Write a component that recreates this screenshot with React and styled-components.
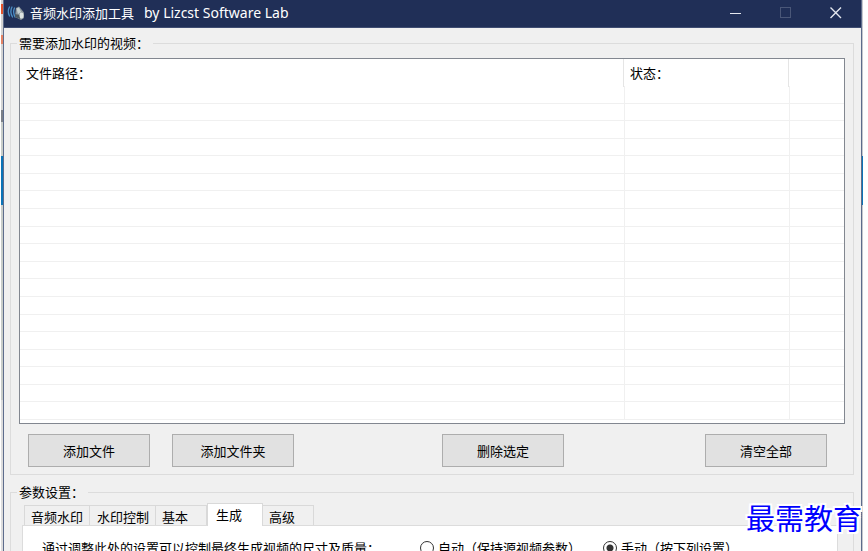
import React, { useState } from "react";
import styled, { createGlobalStyle } from "styled-components";

const ROW_COUNT = 19;
const tabs = ["音频水印", "水印控制", "基本", "生成", "高级"];

const App = () => {
    const [activeTab, setActiveTab] = useState("生成");
    const [mode, setMode] = useState("manual");

    return (
        <Desktop>
            <GlobalStyle />
            <LeftEdge />
            <Window>
                <TitleBar>
                    <SpeakerIcon />
                    <Title>音频水印添加工具 <Vendor>by Lizcst Software Lab</Vendor></Title>
                    <CaptionButton aria-label="最小化">
                        <svg width="12" height="12"><path d="M0 6.5H11" stroke="#e4e7ee" /></svg>
                    </CaptionButton>
                    <CaptionButton aria-label="最大化" disabled>
                        <svg width="12" height="12"><rect x="0.5" y="0.5" width="10" height="10" fill="none" stroke="#4a5778" /></svg>
                    </CaptionButton>
                    <CaptionButton aria-label="关闭">
                        <svg width="12" height="12"><path d="M0.5 0.5L11 11M11 0.5L0.5 11" stroke="#e4e7ee" strokeWidth="1.4" /></svg>
                    </CaptionButton>
                </TitleBar>
                <Body>
                    <Group>
                        <Legend>需要添加水印的视频：</Legend>
                        <FileTable>
                            <thead>
                                <HeadRow>
                                    <th>文件路径：</th>
                                    <th>状态：</th>
                                    <th aria-hidden="true" />
                                </HeadRow>
                            </thead>
                            <tbody>
                                {Array.from({ length: ROW_COUNT }, (_, i) => (
                                    <FileRow key={i}>
                                        <td />
                                        <td />
                                        <td />
                                    </FileRow>
                                ))}
                            </tbody>
                        </FileTable>
                        <Actions>
                            <Button>添加文件</Button>
                            <Button>添加文件夹</Button>
                            <DeleteButton>删除选定</DeleteButton>
                            <ClearButton>清空全部</ClearButton>
                        </Actions>
                    </Group>
                    <Group>
                        <Legend>参数设置：</Legend>
                        <TabList role="tablist">
                            {tabs.map(name => (
                                <Tab
                                    key={name}
                                    role="tab"
                                    aria-selected={name === activeTab}
                                    $active={name === activeTab}
                                    onClick={() => setActiveTab(name)}
                                >
                                    {name}
                                </Tab>
                            ))}
                        </TabList>
                        <TabPanel role="tabpanel">
                            <Hint>通过调整此处的设置可以控制最终生成视频的尺寸及质量：</Hint>
                            <RadioLabel>
                                <Radio name="mode" checked={mode === "auto"} onChange={() => setMode("auto")} />
                                自动（保持源视频参数）
                            </RadioLabel>
                            <RadioLabel>
                                <Radio name="mode" checked={mode === "manual"} onChange={() => setMode("manual")} />
                                手动（按下列设置）
                            </RadioLabel>
                        </TabPanel>
                    </Group>
                </Body>
            </Window>
            <RightEdge />
            <Watermark>最需教育</Watermark>
        </Desktop>
    )
}

const SpeakerIcon = () => (
    <svg width="18" height="18" viewBox="0 0 18 18" aria-hidden="true">
        <g fill="none" stroke="#4c8fc4" strokeWidth="1.3" strokeLinecap="round">
            <path d="M2.5 3Q0 7 2.5 12" />
            <path d="M5 3Q2.5 7.5 5.5 13" />
            <path d="M7.5 4Q5.5 8 8 13" />
        </g>
        <path d="M9 4L12 2.5L17 8.5V14L14 16L8 13Z" fill="#8c979d" />
        <path d="M9.5 4.5L12 3.5L14 8L11 10Z" fill="#c6d0d2" />
        <path d="M8 10L13 11L13 15L8 13Z" fill="#4d5961" />
        <ellipse cx="14.5" cy="11.5" rx="2" ry="3" fill="#dce3e3" />
    </svg>
)

const GlobalStyle = createGlobalStyle`
    * {
        box-sizing: border-box;
    }
    body {
        margin: 0;
        overflow: hidden;
        background: #fff;
        color: #000;
        font: 13px/18px "Noto Sans CJK SC", sans-serif;
    }
    button {
        font: inherit;
        color: inherit;
    }
`;

const Desktop = styled.div`
    position: relative;
    display: flex;
    height: 100vh;
    overflow: hidden;
`;

const LeftEdge = styled.div`
    width: 3px;
    border-left: 1px solid #fff;
    background: linear-gradient(
        #d3d3d3 4px, #e2532c 4px 14px, #d3d3d3 14px 35px, #e58263 35px 44px,
        #d3d3d3 44px 110px, #7c8088 110px 122px, #c8cdc9 122px 156px,
        #0b74b8 156px 205px, #c8cdc9 205px 400px, #dcdcdc 400px
    );
`;

const RightEdge = styled.div`
    width: 6px;
    border-right: 5px solid #fff;
    background: linear-gradient(#c5c8cd 156px, #0b74b8 156px 205px, #c5c8cd 205px);
`;

const Window = styled.main`
    flex: 1;
    min-width: 0;
    height: max-content;
    border: 1px solid #5d6c8c;
    border-width: 0 1px;
    background: #f0f0f0;
`;

const TitleBar = styled.header`
    display: flex;
    align-items: center;
    height: 28px;
    padding: 0 0 1px 3px;
    border-bottom: 1px solid #3f4d72;
    background: #202f57;
    color: #fff;
`;

const Title = styled.h1`
    display: flex;
    flex: 1;
    align-items: baseline;
    gap: 10px;
    margin: 0 0 0 5px;
    font: 13px/18px "Noto Sans CJK SC", sans-serif;
`;

const Vendor = styled.span`
    font: 14px/18px "Noto Sans", sans-serif;
`;

const CaptionButton = styled.button`
    display: flex;
    align-items: center;
    justify-content: center;
    width: 50px;
    height: 27px;
    padding: 0;
    border: 0;
    background: none;
`;

const Body = styled.div`
    padding: 6px 7px 24px 6px;
`;

const Group = styled.fieldset`
    min-width: 0;
    margin: 0 0 8px;
    padding: 0 8px 7px;
    border: 1px solid #dcdcdc;
`;

const Legend = styled.legend`
    margin-left: -2px;
    padding: 0 4px 0 2px;
`;

const FileTable = styled.table`
    display: block;
    margin-top: 6px;
    padding-bottom: 3px;
    border: 1px solid #828790;
    background: #fff;

    thead {
        display: block;
    }
    tbody {
        display: flex;
        flex-direction: column;
        height: 334px;
    }
`;

const HeadRow = styled.tr`
    display: grid;
    grid-template-columns: 1fr 165px 55px;
    height: 27px;

    th {
        padding: 5px 6px;
        border-right: 1px solid #e5e5e5;
        font-weight: 400;
        text-align: left;
    }
    th:last-child {
        border-right: 0;
    }
`;

const FileRow = styled.tr`
    flex: 1;
    display: grid;
    grid-template-columns: 1fr 165px 54px;
    border-bottom: 1px solid #f0f0f0;

    td {
        padding: 0;
        border-right: 1px solid #f0f0f0;
    }
    td:last-child {
        border-right: 0;
    }
`;

const Actions = styled.div`
    display: flex;
    padding: 10px 18px 0 9px;
`;

const Button = styled.button`
    width: 122px;
    height: 33px;
    padding: 0;
    border: 1px solid #adadad;
    background: #e1e1e1;

    & + & {
        margin-left: 22px;
    }
`;

const DeleteButton = styled(Button)`
    && {
        margin-left: 148px;
    }
`;

const ClearButton = styled(Button)`
    && {
        margin-left: auto;
    }
`;

const TabList = styled.div`
    display: flex;
    align-items: flex-end;
    height: 24px;
    padding-left: 5px;
`;

const Tab = styled.button`
    height: ${props => props.$active ? "23px" : "20px"};
    margin-bottom: ${props => props.$active ? "-1px" : "0"};
    padding: ${props => props.$active ? "0 20px 0 8px" : "2px 18px 0 6px"};
    border: 1px solid #d9d9d9;
    border-bottom: 0;
    border-left-width: ${props => props.$active ? "1px" : "0"};
    background: ${props => props.$active ? "#fff" : "#f0f0f0"};
    line-height: 18px;
    z-index: ${props => props.$active ? 1 : 0};
    white-space: nowrap;

    &:first-child {
        border-left-width: 1px;
    }
    &:nth-child(-n + 2) {
        padding: 2px 6px 0;
    }
    &:nth-child(2) {
        padding: 2px 6px 0 7px;
    }
`;

const TabPanel = styled.div`
    display: flex;
    align-items: center;
    margin: 0 7px 0 3px;
    padding: 13px 19px;
    border: 1px solid #dcdcdc;
    background: #fff;
`;

const Hint = styled.p`
    margin: 0 40px 0 0;
`;

const RadioLabel = styled.label`
    display: flex;
    align-items: center;
    gap: 4px;
    margin-right: 22px;
`;

const Radio = styled.input.attrs({ type: "radio" })`
    appearance: none;
    width: 14px;
    height: 14px;
    margin: 0;
    border: 1px solid #333;
    border-radius: 50%;
    background: #fff;

    &:checked {
        background: radial-gradient(circle, #333 0 3px, #fff 4px);
    }
`;

const Watermark = styled.div`
    position: absolute;
    right: 6px;
    bottom: 14px;
    color: #0000ff;
    font-size: 29px;
    line-height: 40px;
    text-shadow: 2px 0 #fff, -2px 0 #fff, 0 2px #fff, 0 -2px #fff,
        2px 2px #fff, -2px -2px #fff, 2px -2px #fff, -2px 2px #fff;
`;

export default App;
